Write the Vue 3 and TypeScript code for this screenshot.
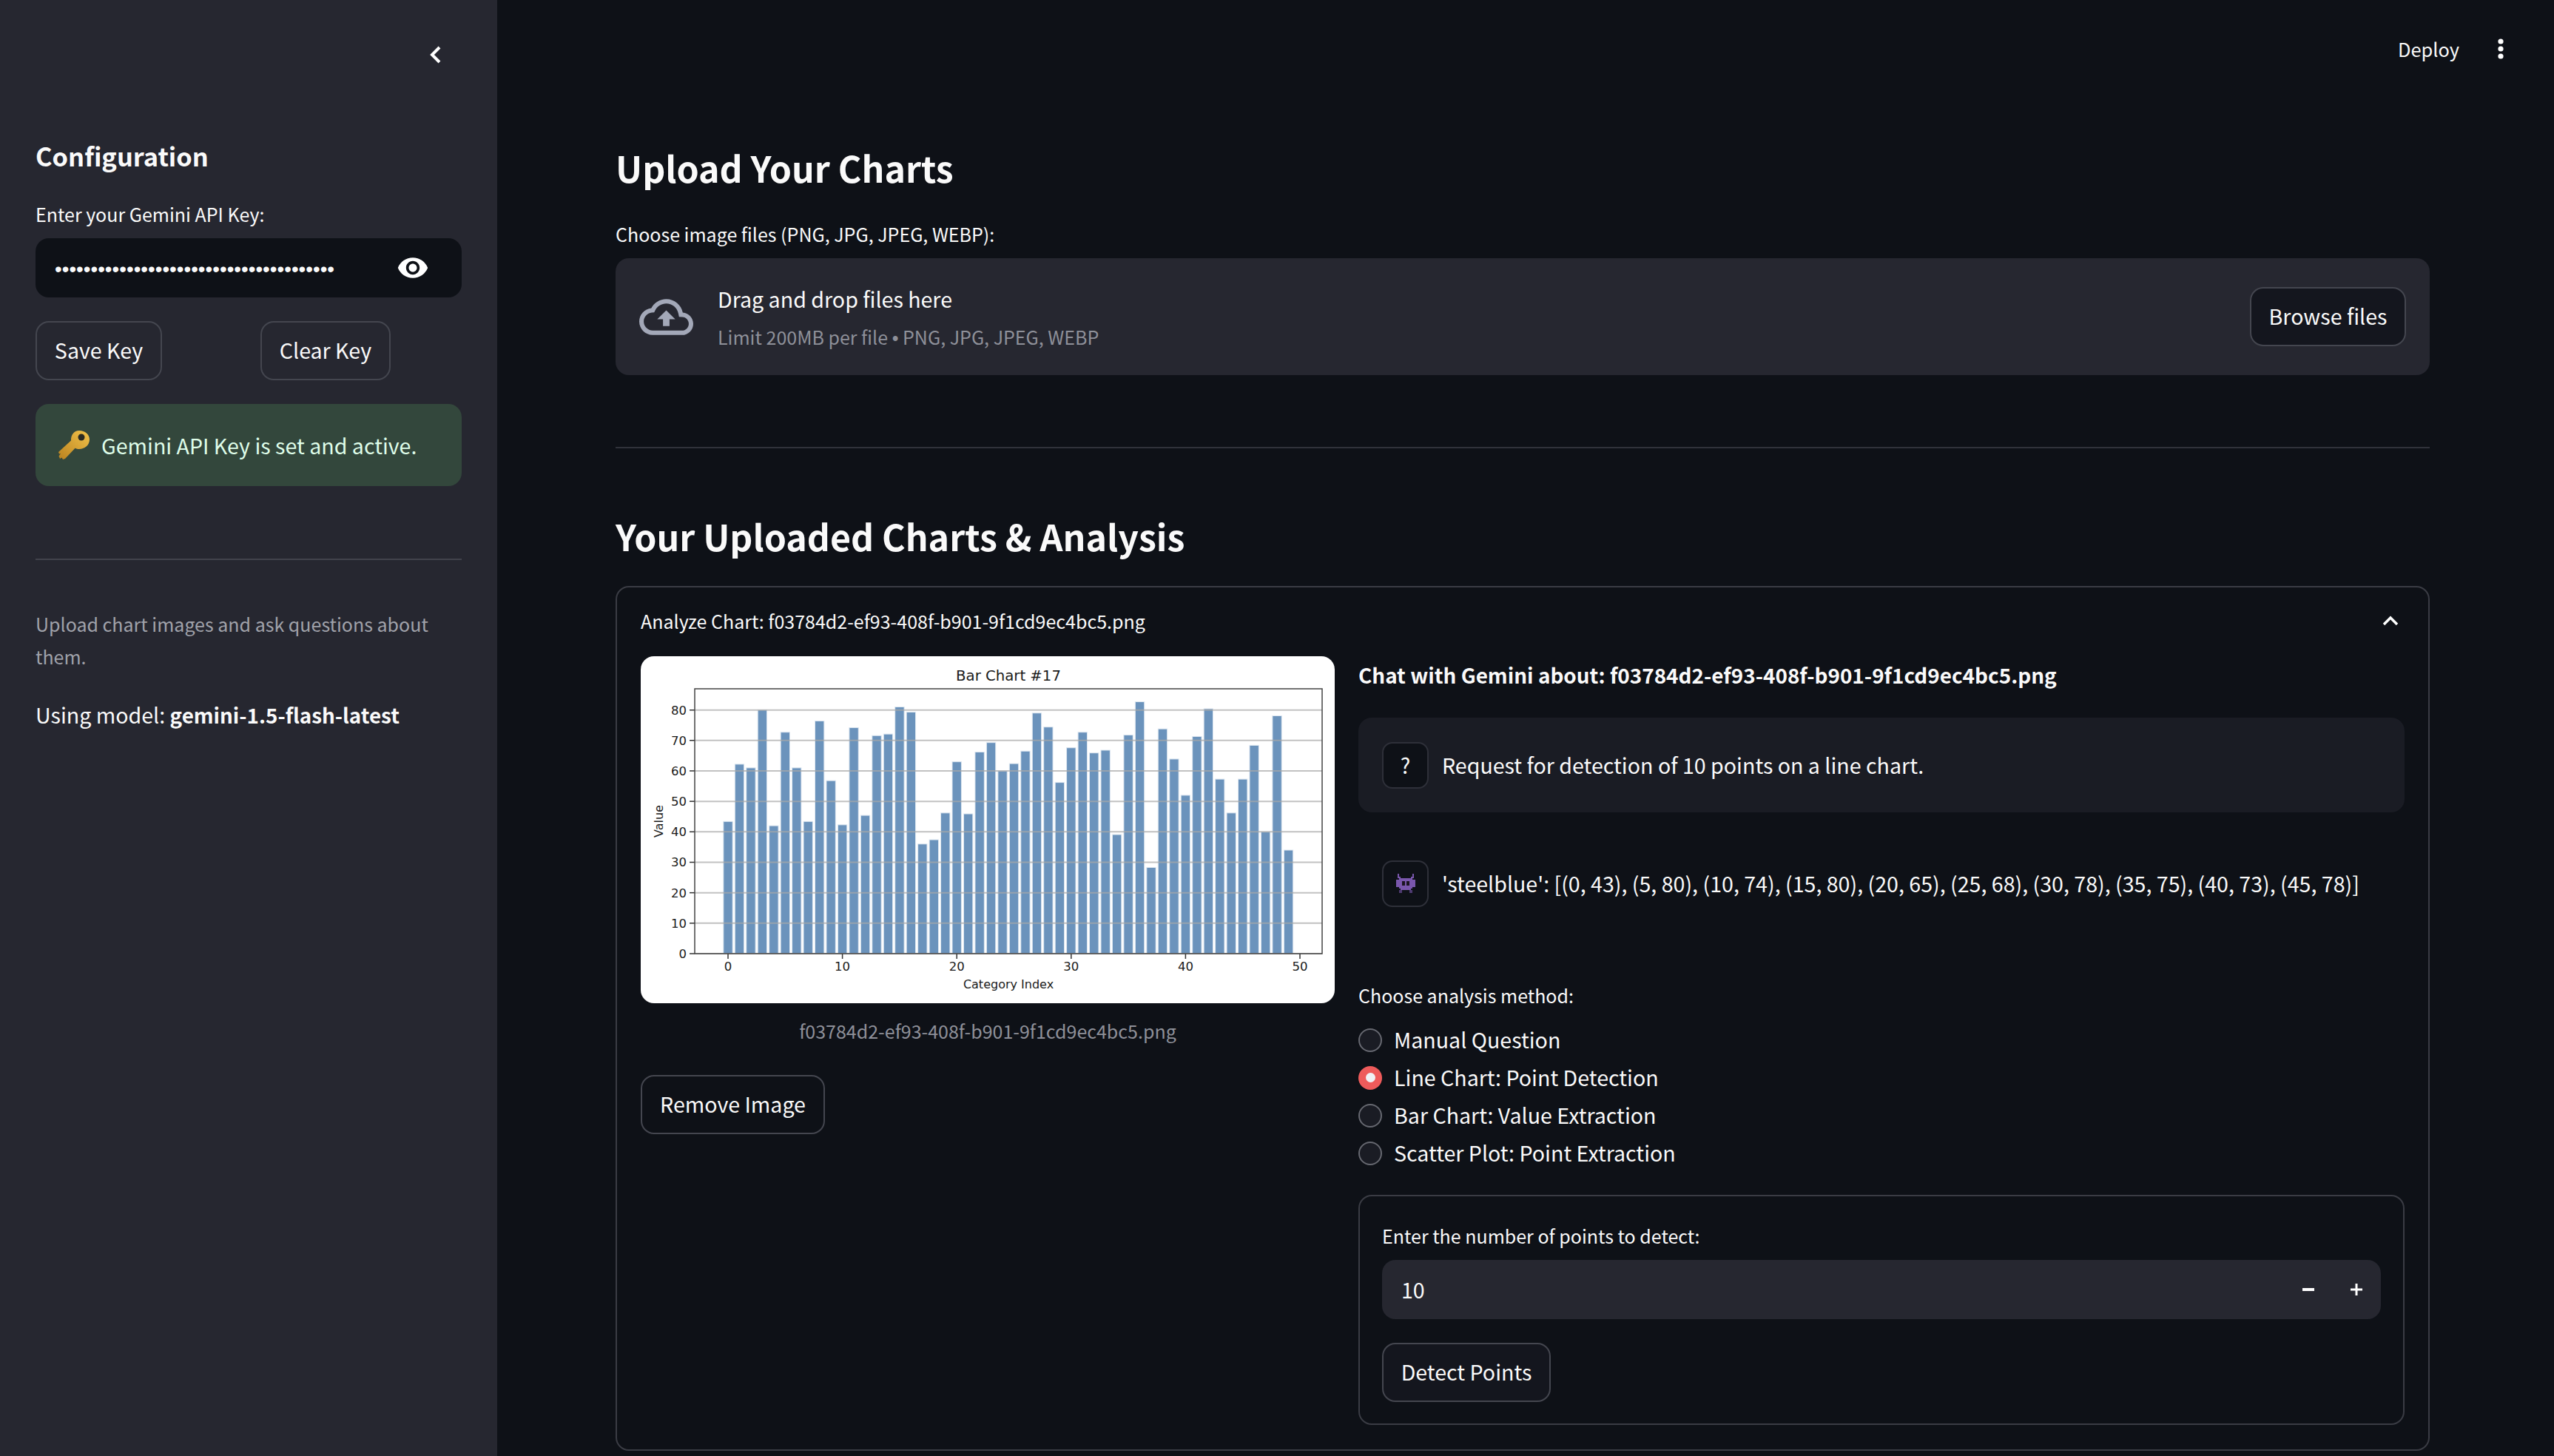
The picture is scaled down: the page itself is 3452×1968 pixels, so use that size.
<template>
  <div class="app">
    <aside class="sidebar">
      <div class="collapse">
        <svg width="16" height="24" viewBox="0 0 16 24" fill="none" stroke="#fff" stroke-width="4">
          <path d="M14 2 4 12l10 10" />
        </svg>
      </div>
      <h3 class="side-title">Configuration</h3>
      <label class="field-label side-label">Enter your Gemini API Key:</label>
      <div class="key-input">
        <input class="key-value" type="password" :value="apiKey" readonly />
        <svg class="eye" width="44" height="44" viewBox="0 0 24 24" fill="#fff">
          <path
            d="M12 4.5C7 4.5 2.73 7.61 1 12c1.73 4.39 6 7.5 11 7.5s9.27-3.11 11-7.5c-1.73-4.39-6-7.5-11-7.5zM12 17c-2.76 0-5-2.24-5-5s2.24-5 5-5 5 2.24 5 5-2.24 5-5 5zm0-8c-1.66 0-3 1.34-3 3s1.34 3 3 3 3-1.34 3-3-1.34-3-3-3z"
          />
        </svg>
      </div>
      <div class="key-buttons">
        <button class="btn save">Save Key</button>
        <button class="btn clear">Clear Key</button>
      </div>
      <div class="alert">
        <!-- key emoji -->
        <svg class="key-icon" width="42" height="40" viewBox="0 0 42 40">
          <defs>
            <linearGradient id="gold" x1="0" y1="1" x2="1" y2="0">
              <stop offset="0" stop-color="#b9811f" />
              <stop offset="1" stop-color="#f2c34a" />
            </linearGradient>
          </defs>
          <path
            d="M28 0c8 0 14 5 14 12 0 8-7 13-14 13-2 0-4-.4-5.500-1.200L9 38l-3 1-1.500-2.500L2 38l-1.500-3.500L3 31l-2 .5L0 29 17 13.500C16.600 6 21 0 28 0z"
            fill="url(#gold)"
          />
          <circle cx="31" cy="9" r="4.500" fill="#2a2a22" />
        </svg>
        <span>Gemini API Key is set and active.</span>
      </div>
      <hr class="side-rule" />
      <p class="side-text">Upload chart images and ask questions about them.</p>
      <p class="model">Using model: <strong>gemini-1.5-flash-latest</strong></p>
    </aside>

    <main class="main">
      <header class="topbar">
        <span class="deploy">Deploy</span>
        <svg class="menu" width="10" height="30" viewBox="0 0 10 30" fill="#fff">
          <circle cx="5" cy="5" r="3.600" />
          <circle cx="5" cy="15" r="3.600" />
          <circle cx="5" cy="25" r="3.600" />
        </svg>
      </header>

      <h2 class="h-upload">Upload Your Charts</h2>
      <label class="field-label upload-label">Choose image files (PNG, JPG, JPEG, WEBP):</label>
      <section class="uploader">
        <svg class="cloud" width="73" height="73" viewBox="0 0 24 24" fill="#a3a8b8">
          <path
            d="M19.35 10.04C18.67 6.59 15.64 4 12 4 9.11 4 6.6 5.64 5.35 8.04 2.34 8.36 0 10.91 0 14c0 3.31 2.69 6 6 6h13c2.76 0 5-2.24 5-5 0-2.64-2.05-4.78-4.65-4.96zM19 18H6c-2.21 0-4-1.79-4-4 0-2.05 1.53-3.76 3.56-3.97l1.07-.11.5-.95C8.08 7.14 9.94 6 12 6c2.62 0 4.88 1.86 5.39 4.43l.3 1.5 1.53.11c1.56.1 2.78 1.41 2.78 2.96 0 1.65-1.35 3-3 3zM8 13h2.55v3h2.9v-3H16l-4-4z"
          />
        </svg>
        <div class="drop-text">
          <div class="drop-title">Drag and drop files here</div>
          <div class="drop-sub">Limit 200MB per file <span class="dot">•</span> PNG, JPG, JPEG, WEBP</div>
        </div>
        <button class="btn browse">Browse files</button>
      </section>

      <hr class="main-rule" />
      <h2 class="h-charts">Your Uploaded Charts &amp; Analysis</h2>

      <section class="expander">
        <div class="exp-head">
          <span>Analyze Chart: {{ fileName }}</span>
          <svg width="22" height="14" viewBox="0 0 22 14" fill="none" stroke="#fff" stroke-width="3.500">
            <path d="M2 12 11 3l9 9" />
          </svg>
        </div>
        <div class="exp-body">
          <div class="left-col">
            <svg class="chart" width="938" height="469" viewBox="0 0 938 469">
              <text x="497" y="33" text-anchor="middle" class="c-title">Bar Chart #17</text>
              <rect
                v-for="bar in bars"
                :key="bar.x"
                :x="bar.x"
                :y="bar.y"
                width="12.400"
                :height="bar.h"
                fill="#6b93bc"
                stroke="#dfe8f1"
                stroke-width="1"
              />
              <g v-for="t in yTicks" :key="t.label">
                <line x1="73" x2="921" :y1="t.y" :y2="t.y" stroke="#a8a8a8" stroke-opacity="0.7" stroke-width="2" />
                <line x1="66" x2="73" :y1="t.y" :y2="t.y" stroke="#333" stroke-width="1.500" />
                <text x="62" :y="t.y + 6" text-anchor="end" class="c-tick">{{ t.label }}</text>
              </g>
              <g v-for="t in xTicks" :key="t.label">
                <line :x1="t.x" :x2="t.x" y1="402" y2="409" stroke="#333" stroke-width="1.500" />
                <text :x="t.x" y="425" text-anchor="middle" class="c-tick">{{ t.label }}</text>
              </g>
              <rect x="73" y="44" width="848" height="358" fill="none" stroke="#444" stroke-width="1.500" />
              <text x="497" y="449" text-anchor="middle" class="c-label">Category Index</text>
              <text transform="translate(30 223) rotate(-90)" text-anchor="middle" class="c-label">Value</text>
            </svg>
            <div class="caption">{{ fileName }}</div>
            <button class="btn remove">Remove Image</button>
          </div>

          <div class="right-col">
            <div class="chat-title">Chat with Gemini about: {{ fileName }}</div>
            <div class="msg user">
              <div class="avatar">?</div>
              <div>Request for detection of 10 points on a line chart.</div>
            </div>
            <div class="msg bot">
              <div class="avatar">
                <!-- alien monster emoji -->
                <svg width="30" height="26" viewBox="0 0 15 13" shape-rendering="crispEdges">
                  <path
                    fill="#7a57ad"
                    d="M2 0h1v2h1v1h7V2h1V0h1v3h-1v1h2v5h-2v1h-1v1H4v-1H3V9H1V4h2V3H2z"
                  />
                  <path fill="#1b1420" d="M5 5h2v3H5zM8 5h2v3H8z" />
                  <path fill="#7a57ad" d="M3 11h2v2H3zM10 11h2v2h-2z" opacity="0.6" />
                </svg>
              </div>
              <div>'steelblue': [(0, 43), (5, 80), (10, 74), (15, 80), (20, 65), (25, 68), (30, 78), (35, 75), (40, 73), (45, 78)]</div>
            </div>

            <label class="field-label method-label">Choose analysis method:</label>
            <div class="radios">
              <div v-for="opt in methods" :key="opt" class="radio-row">
                <span class="radio" :class="{ on: opt === selected }"></span>
                <span class="radio-text">{{ opt }}</span>
              </div>
            </div>

            <div class="form">
              <label class="field-label">Enter the number of points to detect:</label>
              <div class="number">
                <span class="num-value">10</span>
                <svg class="step" width="16" height="4" viewBox="0 0 16 4" fill="#fff"><rect width="16" height="4" /></svg>
                <svg class="step plus" width="16" height="16" viewBox="0 0 16 16" fill="#fff">
                  <path d="M6.500 0h3v6.500H16v3H9.500V16h-3V9.500H0v-3h6.500z" />
                </svg>
              </div>
              <button class="btn detect">Detect Points</button>
            </div>
          </div>
        </div>
      </section>
    </main>
  </div>
</template>

<script setup lang="ts">
import { computed, ref } from "vue";

const fileName = "f03784d2-ef93-408f-b901-9f1cd9ec4bc5.png";
const apiKey = ref("x".repeat(39));

const methods = [
  "Manual Question",
  "Line Chart: Point Detection",
  "Bar Chart: Value Extraction",
  "Scatter Plot: Point Extraction",
];
const selected = ref("Line Chart: Point Detection");

// read off the picture, one value per category
const values = [
  43.4, 62.2, 61, 80, 42, 72.7, 61, 43.4, 76.4, 56.8, 42.3, 74.2, 45.4, 71.6, 72.1, 81, 79.3, 36,
  37.4, 46.2, 63, 45.9, 66.2, 69.3, 60, 62.4, 66.5, 79, 74.4, 56.2, 67.6, 72.7, 65.9, 66.8, 39.1,
  71.8, 82.7, 28.3, 73.8, 63.9, 52, 71.3, 80.4, 57.3, 46.2, 57.3, 68.4, 40, 78.1, 34,
];

const xOrigin = 118;
const xUnit = 15.46;
const yOrigin = 402;
const yUnit = 4.117;

const bars = computed(() =>
  values.map((v, i) => ({
    x: xOrigin + i * xUnit - 6.2,
    y: yOrigin - v * yUnit,
    h: v * yUnit,
  }))
);

const yTicks = [0, 10, 20, 30, 40, 50, 60, 70, 80].map((v) => ({
  label: String(v),
  y: yOrigin - v * yUnit,
}));

const xTicks = [0, 10, 20, 30, 40, 50].map((v) => ({
  label: String(v),
  x: xOrigin + v * xUnit,
}));
</script>

<style>
html,
body {
  margin: 0;
  background: #0e1117;
}
</style>

<style scoped>
.app {
  display: grid;
  grid-template-columns: 672px 1fr;
  width: 3452px;
  height: 1968px;
  overflow: hidden;
  background: #0e1117;
  color: #fafafa;
  font-family: "Noto Sans CJK SC", "Noto Sans", sans-serif;
  font-size: 28.600px;
  line-height: 50px;
}

.sidebar {
  background: #262730;
  padding: 0 48px;
}

.collapse {
  display: flex;
  justify-content: flex-end;
  height: 85px;
  padding: 62px 28px 0 0;
  box-sizing: border-box;
}

.side-title {
  margin: 95px 0 0;
  font-size: 34.400px;
  line-height: 60px;
  font-weight: 600;
}

.field-label {
  display: block;
  padding-bottom: 3px;
  font-size: 25px;
  line-height: 37px;
}

.side-label {
  margin-top: 31px;
}

.key-input {
  display: flex;
  align-items: center;
  justify-content: space-between;
  height: 80px;
  margin-top: 11px;
  padding: 0 44px 0 26px;
  background: #0e1117;
  border-radius: 18px;
}

.key-value {
  width: 420px;
  padding: 3px 0 0;
  border: 0;
  outline: 0;
  background: transparent;
  color: #fafafa;
  font-family: "Liberation Sans", sans-serif;
  font-size: 27.700px;
}

.key-buttons {
  display: flex;
  margin-top: 32px;
}

.btn {
  box-sizing: border-box;
  height: 80px;
  padding: 0 0 3px;
  border: 2px solid #44464f;
  border-radius: 18px;
  background: transparent;
  color: #fafafa;
  font-family: inherit;
  font-size: 28.600px;
}

.save {
  width: 171px;
}

.clear {
  width: 176px;
  margin-left: 133px;
}

.alert {
  display: flex;
  align-items: center;
  gap: 16px;
  height: 111px;
  margin-top: 32px;
  padding: 0 31px;
  border-radius: 18px;
  background: #33473c;
  color: #dffde9;
}

.side-rule {
  height: 2px;
  margin: 98px 0 0;
  border: 0;
  background: #41434c;
}

.side-text {
  margin: 64px 0 0;
  color: #a0a2aa;
  font-size: 25px;
  line-height: 44px;
}

.model {
  margin: 32px 0 0;
}

.model strong {
  font-size: 27.800px;
  font-weight: 600;
}

.main {
  padding: 0 168px 0 160px;
}

.topbar {
  display: flex;
  align-items: center;
  justify-content: flex-end;
  height: 132px;
  margin-right: -101px;
  font-size: 25.400px;
}

.deploy {
  margin-right: 51px;
}

.h-upload,
.h-charts {
  margin: 0;
  padding-bottom: 2px;
  font-size: 48.300px;
  line-height: 58px;
  font-weight: 600;
}

.h-upload {
  margin-top: 65px;
}

.upload-label {
  margin-top: 41px;
}

.uploader {
  display: flex;
  align-items: center;
  height: 158px;
  margin-top: 11px;
  padding: 0 32px;
  border-radius: 18px;
  background: #262730;
}

.drop-text {
  flex: 1;
  margin-left: 33px;
}

.drop-title {
  line-height: 50px;
}

.drop-sub {
  margin-top: 6px;
  color: #8e9099;
  font-size: 25px;
  line-height: 40px;
}

.dot {
  font-family: "Liberation Sans", sans-serif;
}

.browse {
  width: 211px;
  background: #14161e;
}

.main-rule {
  height: 2px;
  margin: 97px 0 0;
  border: 0;
  background: #30323a;
}

.h-charts {
  margin-top: 89px;
}

.expander {
  box-sizing: border-box;
  height: 1169px;
  margin-top: 37px;
  padding: 25px 32px 0;
  border: 2px solid #3a3c44;
  border-radius: 18px;
}

.exp-head {
  display: flex;
  align-items: center;
  justify-content: space-between;
  padding-right: 8px;
  font-size: 25px;
  line-height: 40px;
}

.exp-body {
  display: grid;
  grid-template-columns: 938px 1fr;
  gap: 32px;
  margin-top: 28px;
}

.chart {
  display: block;
  border-radius: 18px;
  background: #fff;
}

.c-title,
.c-tick,
.c-label {
  font-family: "DejaVu Sans", sans-serif;
  fill: #1a1a1a;
}

.c-title {
  font-size: 19.700px;
}

.c-tick {
  font-size: 16.500px;
}

.c-label {
  font-size: 16px;
}

.caption {
  margin-top: 17px;
  padding-bottom: 1px;
  color: #8e9099;
  font-size: 25px;
  line-height: 40px;
  text-align: center;
}

.remove {
  width: 249px;
  margin-top: 39px;
}

.chat-title {
  font-size: 27.900px;
  font-weight: 600;
}

.msg {
  display: flex;
  align-items: center;
  gap: 18px;
  height: 128px;
  margin-top: 33px;
  padding: 0 32px;
  box-sizing: border-box;
  border-radius: 18px;
}

.msg.bot {
  margin-top: 32px;
}

.user {
  background: #1a1c24;
}

.avatar {
  display: flex;
  align-items: center;
  justify-content: center;
  flex: none;
  box-sizing: border-box;
  width: 63px;
  height: 63px;
  border: 2px solid #2e3039;
  border-radius: 14px;
  background: #0e1117;
}

.method-label {
  margin-top: 69px;
}

.radios {
  margin-top: 13px;
}

.radio-row {
  display: flex;
  align-items: center;
  gap: 16px;
  height: 51px;
}

.radio-text {
  padding-bottom: 2px;
}

.radio {
  box-sizing: border-box;
  flex: none;
  width: 32px;
  height: 32px;
  border: 2.500px solid #666870;
  border-radius: 50%;
  background: #1a1c24;
}

.radio.on {
  display: flex;
  align-items: center;
  justify-content: center;
  border: 0;
  background: #ee5b5b;
}

.radio.on::after {
  content: "";
  width: 13px;
  height: 13px;
  border-radius: 50%;
  background: #f0f2f6;
}

.form {
  box-sizing: border-box;
  height: 311px;
  margin-top: 31px;
  padding: 35px 30px 0;
  border: 2px solid #3a3c44;
  border-radius: 18px;
}

.number {
  display: flex;
  align-items: center;
  height: 80px;
  margin-top: 11px;
  padding: 0 25px 0 26px;
  border-radius: 18px;
  background: #262730;
}

.num-value {
  flex: 1;
}

.plus {
  margin-left: 49px;
}

.detect {
  display: block;
  width: 228px;
  margin-top: 32px;
  background: #14161e;
}
</style>
